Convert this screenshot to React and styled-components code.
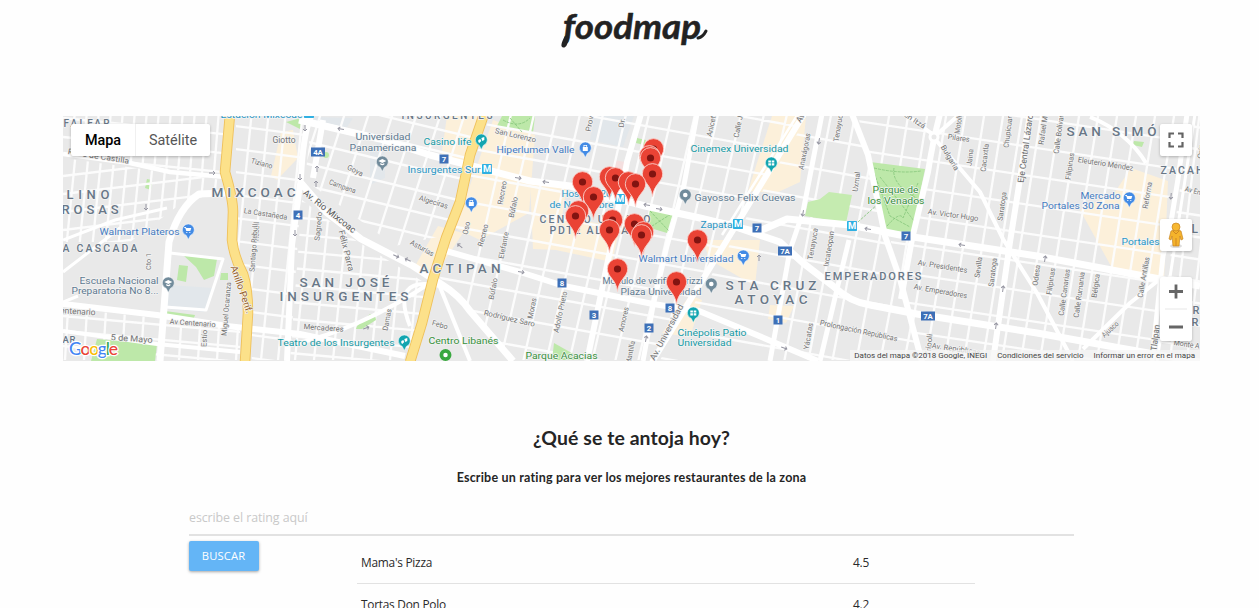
import React from 'react';
import styled, { createGlobalStyle } from 'styled-components';

const GlobalStyle = createGlobalStyle`
  * { box-sizing: border-box; }
  html, body { margin: 0; background: #fefefe; overflow: hidden; }
  body { font-family: "Open Sans", "Noto Sans", sans-serif; color: #2a2a2a; }
`;

const Page = styled.main`
  height: 608px;
  overflow: hidden;
`;

const Header = styled.header`
  height: 116px;
  padding-top: 1px;
  display: flex;
  justify-content: center;
`;

const Logo = styled.svg`
  width: 170px;
  height: 56px;
  margin-left: 7px;
`;

const MapFrame = styled.section`
  position: relative;
  width: 1137px;
  height: 245px;
  margin-left: 63px;
  overflow: hidden;
  font-family: Roboto, "Liberation Sans", sans-serif;
`;

const MapCanvas = styled.svg`
  display: block;
  width: 1137px;
  height: 245px;
`;

const MapTypes = styled.div`
  position: absolute;
  top: 8px;
  left: 8px;
  height: 32px;
  display: flex;
  background: #fff;
  border-radius: 2px;
  box-shadow: 0 1px 3px rgba(0, 0, 0, 0.25);
`;

const MapType = styled.button`
  width: ${(p) => (p.$active ? 64 : 75)}px;
  padding: 0;
  border: 0;
  border-left: ${(p) => (p.$active ? 0 : 1)}px solid #f0f0f0;
  background: none;
  font: ${(p) => (p.$active ? 500 : 400)} 14.4px Roboto, sans-serif;
  color: ${(p) => (p.$active ? '#000' : '#565656')};
`;

const Controls = styled.div`
  position: absolute;
  top: 8px;
  right: 8px;
  width: 32px;
  display: flex;
  flex-direction: column;
`;

const Control = styled.button`
  height: ${(p) => p.$height || 32}px;
  margin: 0 0 ${(p) => p.$gap || 0}px;
  padding: 0;
  border: 0;
  border-radius: 2px;
  background: #fff;
  box-shadow: 0 1px 3px rgba(0, 0, 0, 0.25);
  svg { display: block; }
`;

const Attribution = styled.footer`
  position: absolute;
  right: 0;
  bottom: 0;
  height: 11px;
  padding: 1px 5px 0 4px;
  display: flex;
  gap: 10px;
  background: rgba(245, 245, 245, 0.75);
  font-size: 8px;
  line-height: 10px;
  color: #444;
  white-space: nowrap;
`;

const Intro = styled.section`
  padding-top: 64px;
  padding-left: 4px;
  text-align: center;
  font-family: Lato, sans-serif;
  color: #252525;
`;

const Title = styled.h2`
  margin: 0;
  font-size: 19.4px;
  line-height: 26px;
  font-weight: 700;
  letter-spacing: 0.1px;
`;

const Subtitle = styled.h3`
  margin: 19px 0 0;
  font-size: 12.5px;
  line-height: 16px;
  font-weight: 700;
  letter-spacing: 0.2px;
`;

const Search = styled.form`
  width: 885px;
  margin: 15px 0 0 189px;
`;

const RatingInput = styled.input`
  display: block;
  width: 100%;
  height: 35px;
  padding: 0 0 1px;
  border: 0;
  border-bottom: 2px solid #e2e2e2;
  background: none;
  font: 12.4px "Open Sans", sans-serif;
  letter-spacing: -0.08px;
  &::placeholder { color: #c9c9c9; opacity: 1; }
`;

const Results = styled.div`
  display: flex;
  align-items: flex-start;
  padding-top: 5px;
`;

const SearchButton = styled.button`
  width: 70px;
  height: 30px;
  margin-right: 98px;
  padding: 0 1px 2px 0;
  border: 0;
  border-radius: 2px;
  background: #64b5f6;
  box-shadow: 0 1px 3px rgba(0, 0, 0, 0.35);
  font: 11.2px "Open Sans", sans-serif;
  letter-spacing: 0.15px;
  color: #fff;
`;

const Table = styled.div`
  width: 618px;
`;

const Row = styled.div`
  height: 42.5px;
  padding: 0 4px;
  display: grid;
  grid-template-columns: 492px 1fr;
  align-items: center;
  border-bottom: 1px solid #e2e2e2;
  font-size: 11.9px;
  letter-spacing: -0.26px;
`;

const gridLines = (x0, x1, step, slope) => {
  const lines = [];
  for (let x = x0; x < x1; x += step) lines.push(`M${x} 110l${slope * 260} 260`);
  return lines.join('');
};
const crossLines = (left, right, y0, y1, step, slope) => {
  const lines = [];
  for (let y = y0; y < y1; y += step) lines.push(`M${left} ${y}L${right} ${y + slope * (right - left)}`);
  return lines.join('');
};

const districts = [
  { area: '63,116 226,116 222,176 63,155', d: gridLines(75, 260, 12, -0.08) + crossLines(63, 230, 118, 160, 19, 0.1) },
  { area: '63,158 222,180 220,190 175,208 130,242 63,242', d: gridLines(80, 270, 13, -0.1) + crossLines(63, 230, 176, 250, 18, -0.12) },
  { area: '63,308 240,327 240,360 63,360', d: gridLines(80, 280, 19, -0.06) + crossLines(63, 250, 316, 370, 15, 0.09) },
  { area: '236,116 306,116 290,360 252,360 236,245', d: gridLines(252, 340, 17, -0.1) + crossLines(228, 306, 125, 360, 23, 0.13) },
  { area: '312,116 480,116 447,235 395,246 305,180', d: gridLines(322, 540, 24, -0.32) + crossLines(300, 490, 96, 242, 22, 0.24) },
  { area: '302,200 355,240 430,286 410,360 290,360', d: gridLines(320, 470, 19, -0.1) + crossLines(290, 440, 200, 360, 17, 0.09) },
  { area: '490,116 800,116 652,360 516,360 438,276 450,230', d: gridLines(512, 860, 23, -0.23) + crossLines(440, 800, 62, 360, 27, 0.18) },
  { area: '808,116 855,116 920,360 660,360', d: gridLines(832, 1000, 24, -0.19) + crossLines(650, 930, 108, 360, 31, 0.18) },
  { area: '858,116 1184,116 1148,360 922,360', d: gridLines(890, 1240, 19, -0.16) + crossLines(850, 1200, 62, 360, 29, 0.15) },
  { area: '1190,116 1200,116 1200,360 1156,360', d: gridLines(1200, 1250, 17, -0.12) + crossLines(1150, 1200, 120, 360, 22, 0.15) },
];

const blocks = [
  ['#fcf0da', '281,132 293,130 298,158 277,180 271,176'],
  ['#fcf0da', '447,116 480,116 466,166 441,158'],
  ['#fcf0da', '493,120 535,135 529,213 480,240 455,228'],
  ['#fcf0da', '438,226 463,233 433,278 415,266'],
  ['#fcf0da', '530,180 567,185 557,250 533,249'],
  ['#fcf0da', '558,215 620,228 612,262 556,250'],
  ['#fcf0da', '772,116 806,116 800,182 776,193 748,191'],
  ['#fcf0da', '702,240 760,240 755,286 710,260'],
  ['#fcf0da', '690,295 702,300 690,337 662,333'],
  ['#fcf0da', '770,305 794,306 786,323 768,319'],
  ['#fcf0da', '1131,168 1168,181 1164,280 1112,268 1080,210 1115,192'],
  ['#e2e7eb', '168,285 214,288 204,312 166,309'],
  ['#e2e7eb', '370,149 384,138 385,178 370,185'],
  ['#e2e7eb', '314,117 353,118 343,133 319,128'],
  ['#e2e7eb', '594,116 634,116 623,147 590,140'],
  ['#f4dfdf', '614,160 630,163 625,175 613,173'],
  ['#bde8a9', '183,255 217,259 214,276 204,280 196,267'],
  ['#bde8a9', '179,265 188,266 186,282 177,280'],
  ['#bde8a9', '221,273 228,273 228,280 220,280'],
  ['#bde8a9', '147,179 152,180 151,190 145,188'],
  ['#bde8a9', '165,311 195,315 194,318 164,317'],
  ['#bde8a9', '286,122 301,118 302,130'],
  ['#bde8a9', '502,116 535,116 533,133 497,126'],
  ['#bde8a9', '637,138 646,140 644,145 636,143'],
  ['#bde8a9', '1134,141 1144,142 1142,147 1133,145'],
];

const parks = [
  ['#bde8a9', '870,162 925,169 912,232 887,231'],
  ['#c5ebb0', '808,202 820,199 829,192 852,195 846,223 805,216'],
  ['#bde8a9', '97,339 157,344 155,361 91,361'],
  ['#bde8a9', '650,209 673,213 667,233 647,227'],
  ['#bde8a9', '554,343 584,360 552,360'],
  ['#bde8a9', '357,326 370,314 375,315 376,320 362,329 356,329'],
];

const roads = [
  [4.5, 'M63 154L130 163L170 172L225 177'],
  [7, 'M225 193L199 194Q179 207 169 242L160 361'],
  [6, 'M63 304L157 315L227 326L300 334L405 356'],
  [4, 'M63 331L157 344L240 352'],
  [3, 'M63 240L115 220L167 208M63 272L120 228M78 296L63 302M170 253L223 259L206 310L165 307'],
  [6, 'M311 116Q303 135 301 177L292 245L287 361M323 120L313 178'],
  [7, 'M301 183L326 212L361 239L413 266L441 284Q459 295 470 311L513 361'],
  [7, 'M299 120L380 139L430 155L530 181L570 186L645 206L700 218L757 232L787 219L850 225L900 235L1037 256L1160 279L1200 286'],
  [6, 'M804 114L727 240L652 362'],
  [2.5, 'M798 114L722 235'],
  [6, 'M439 249L520 272L564 286L653 304L699 311L752 333L818 361'],
  [7, 'M733 226L780 242L803 263L833 286Q850 302 870 305L917 314L980 324L1037 333L1120 348L1200 362'],
  [6, 'M852 114L868 155L885 236L900 279L922 362'],
  [6, 'M940 114Q933 140 928 172L912 239L901 299'],
  [6, 'M1030 114L1020 179L1010 242L993 361'],
  [5, 'M1187 114L1178 179L1171 222L1163 256L1152 361'],
  [3, 'M1195 114L1185 180L1168 290L1157 361'],
  [4, 'M935 139L980 192L1003 239L1037 293L1073 361M1160 279L1130 303L1083 349'],
  [4, 'M960 114L935 136L905 114M1090 117Q1127 132 1146 163'],
  [6, 'M641 114L627 162L611 246L587 361'],
  [5, 'M697 114L684 185L667 246L653 306L643 361'],
  [5, 'M822 114L803 212L790 250L770 361'],
  [5, 'M849 240L838 285L820 361'],
  [4, 'M410 326Q390 275 440 286M290 345Q360 330 433 281M440 287L470 361'],
];

const LABEL = '#687787';
const STREET = '#737373';
const POI = '#5d7990';
const SHOP = '#447bc1';
const TEAL = '#159aa5';
const GREEN = '#38913c';
const METRO = '#2996c4';

/* [text, x, y, width, size, color, rotation, weight] */
const labels = [
  ['FALFAR', 63, 127, 46, 10, LABEL, 0, 500],
  ['INSURGENTES', 401, 119, 91, 10, LABEL, 0, 500],
  ['LINO', 66, 199, 43, 13, LABEL, 0, 500],
  ['ROSAS', 61, 214, 57, 13, LABEL, 0, 500],
  ['MIXCOAC', 211, 197, 84, 13.5, LABEL, 0, 500],
  ['A CASCADA', 62, 252, 75, 10.5, LABEL, 0, 500],
  ['AR', 62, 343, 13, 9.5, LABEL, 0, 500],
  ['SAN JOSÉ', 299, 287, 90, 13.5, LABEL, 0, 500],
  ['INSURGENTES', 279, 301, 129, 13.5, LABEL, 0, 500],
  ['ACTIPAN', 419, 273, 81, 13.5, LABEL, 0, 500],
  ['CENTRO URBANO', 539, 223, 111, 10.5, LABEL, 0, 500],
  ['PDTE ALEMÁN', 549, 234, 88, 10.5, LABEL, 0, 500],
  ['STA CRUZ', 725, 290, 91, 13.5, LABEL, 0, 500],
  ['ATOYAC', 734, 304, 73, 13.5, LABEL, 0, 500],
  ['EMPERADORES', 824, 280, 97, 11, LABEL, 0, 500],
  ['SAN SIMÓ', 1066, 136, 90, 13.5, LABEL, 0, 500],
  ['ZACAH', 1160, 174, 43, 10.5, LABEL, 0, 500],
  ['L', 1191, 233, 8, 12, LABEL, 0, 500],
  ['R', 1192, 314, 8, 11, LABEL, 0, 500],
  ['RI', 1191, 326, 14, 11, LABEL, 0, 500],
  ['Universidad', 355, 140, 55, 9.9, POI],
  ['Panamericana', 349, 151, 67, 9.9, POI],
  ['Casino life', 423, 145, 48, 9.9, TEAL],
  ['Insurgentes Sur', 407, 173, 73, 9.9, METRO],
  ['Estación Mixcoac', 220, 118, 82, 9.9, METRO],
  ['Hiperlumen Valle', 496, 153, 78, 9.9, SHOP],
  ['Walmart Plateros', 99, 235, 80, 9.9, SHOP],
  ['Escuela Nacional', 79, 284, 79, 9.9, POI],
  ['Preparatoria No 8...', 71, 294, 87, 9.9, POI],
  ['Teatro de los Insurgentes', 277, 346, 117, 9.9, TEAL],
  ['Centro Libanés', 428, 344, 70, 9.9, GREEN],
  ['Parque Acacias', 525, 359, 72, 9.9, GREEN],
  ['Hospital 20', 561, 197, 50, 9.9, METRO],
  ['de Noviembre', 549, 208, 64, 9.9, METRO],
  ['Cinemex Universidad', 690, 152, 98, 9.9, TEAL],
  ['Gayosso Felix Cuevas', 694, 201, 101, 9.9, POI],
  ['Zapata', 700, 228, 32, 9.9, METRO],
  ['Walmart Universidad', 638, 262, 95, 9.9, SHOP],
  ['Módulo de verificentrizzi', 602, 284, 100, 9.9, POI],
  ['Plaza Universidad', 620, 295, 81, 9.9, POI],
  ['Cinépolis Patio', 677, 336, 69, 9.9, TEAL],
  ['Universidad', 677, 346, 54, 9.9, TEAL],
  ['Parque de', 872, 193, 46, 9.9, GREEN],
  ['los Venados', 867, 204, 57, 9.9, GREEN],
  ['Mercado', 1080, 199, 40, 9.9, SHOP],
  ['Portales 30 Zona', 1041, 209, 78, 9.9, SHOP],
  ['Portales', 1121, 245, 38, 9.9, METRO],
  ['Rosa de Castilla', 67, 154, 62, 8, STREET, 9],
  ['Giotto', 272, 143, 23, 8.5, STREET],
  ['Tiziano', 250, 163, 22, 7.5, STREET, 15],
  ['La Castañeda', 243, 213, 44, 7.5, STREET, 9],
  ['Rebull', 258, 241, 19, 7.5, STREET, -88],
  ['Santiago Rebull', 254, 272, 48, 7.5, STREET, -86],
  ['Cto 1', 150, 270, 17, 7.5, STREET, -90],
  ['Centenario', 54, 313, 41, 8.5, STREET, 3],
  ['Av Centenario', 169, 324, 46, 7.5, STREET, 4],
  ['5 de Mayo', 110, 340, 42, 8.5, STREET, 4],
  ['Miguel Ocaranza', 226, 336, 54, 7.5, STREET, -85],
  ['Estío', 206, 347, 17, 7.5, STREET, -88],
  ['Anillo Perif.', 230, 267, 50, 9.7, '#975d23', 71],
  ['Goya', 346, 169, 17, 7.5, STREET, 26],
  ['Campana', 328, 184, 28, 7.5, STREET, 20],
  ['Algeciras', 418, 200, 30, 7.5, STREET, 17],
  ['Av. Río Mixcoac', 302, 194, 64, 9, '#555', 38],
  ['Félix Parra', 338, 231, 42, 8.5, STREET, 76],
  ['Sagredo', 319, 241, 29, 7.5, STREET, -85],
  ['Asturias', 409, 244, 26, 7.5, STREET, 29],
  ['San Lorenzo', 494, 133, 42, 7.5, STREET, 13],
  ['Recreo', 502, 205, 24, 7.5, STREET, -80],
  ['Búfalo', 513, 218, 21, 7.5, STREET, -78],
  ['Oso', 467, 235, 13, 7.5, STREET, -78],
  ['Recreo', 482, 247, 23, 7.5, STREET, -75],
  ['Elefante', 503, 259, 27, 7.5, STREET, -79],
  ['Búfalo', 493, 300, 22, 7.5, STREET, -79],
  ['Rodríguez Saro', 483, 315, 52, 7.5, STREET, 13],
  ['Mercaderes', 303, 329, 40, 7.5, STREET, 4],
  ['Damas', 387, 331, 22, 7.5, STREET, -79],
  ['Febo', 431, 325, 16, 7.5, STREET, 16],
  ['Provi', 590, 132, 18, 7.5, STREET, -79],
  ['Dr. R', 623, 128, 17, 7.5, STREET, -80],
  ['Moras', 532, 319, 21, 7.5, STREET, -79],
  ['Adolfo Prieto', 558, 333, 42, 7.5, STREET, -78],
  ['Amores', 623, 332, 25, 7.5, STREET, -78],
  ['Mantilla', 630, 365, 24, 7.5, STREET, -79],
  ['Av. Universidad', 654, 361, 62, 8.5, STREET, -62],
  ['Anicet', 711, 137, 21, 7.5, STREET, -78],
  ['Calle J.', 738, 138, 24, 7.5, STREET, -79],
  ['Av. Universidad', 800, 123, 53, 8.5, STREET, -58],
  ['Anaxágoras', 803, 170, 37, 7.5, STREET, -79],
  ['Tenayuc', 838, 142, 27, 7.5, STREET, -81],
  ['Uxmal', 857, 192, 20, 7.5, STREET, -82],
  ['Tenayuca', 812, 260, 32, 7.5, STREET, -80],
  ['Ixcateopan', 828, 267, 36, 7.5, STREET, -81],
  ['Prolongación Repúblicas', 819, 325, 79, 7.8, STREET, 12],
  ['Yácatas', 808, 350, 27, 7.5, STREET, -80],
  ['Chichén Itzá', 886, 105, 44, 7.5, STREET, 33],
  ['Pilares', 947, 139, 22, 7.5, STREET, 8],
  ['Bulgaria', 940, 147, 28, 7.5, STREET, 59],
  ['Jaina', 971, 166, 17, 7.5, STREET, -83],
  ['Motoli', 959, 134, 18, 7.5, STREET, -81],
  ['Av. Víctor Hugo', 927, 214, 51, 7.7, STREET, 8],
  ['Av. Presidentes', 917, 265, 50, 7.7, STREET, 9],
  ['Av. Emperadores', 913, 289, 54, 7.7, STREET, 10],
  ['Trípoli', 930, 356, 22, 7.5, STREET, -85],
  ['Av. Repúblicas', 931, 348, 49, 7.5, STREET, 8],
  ['Sevilla', 979, 278, 21, 7.5, STREET, -82],
  ['Saratoga', 993, 287, 29, 7.5, STREET, -83],
  ['Saratoga', 1002, 221, 29, 7.5, STREET, -82],
  ['Cacaxtla', 985, 172, 28, 7.5, STREET, -83],
  ['Chupícuar', 1008, 148, 32, 7.5, STREET, -83],
  ['Eje Central Lázaro', 1023, 183, 69, 8.7, '#666', -82],
  ['Rafael M', 1043, 145, 29, 7.5, STREET, -82],
  ['Calle Bolívar', 1058, 154, 39, 7.5, STREET, -82],
  ['Filipinas', 1070, 180, 27, 7.5, STREET, -82],
  ['Eleuterio Méndez', 1077, 162, 56, 7.7, STREET, 9],
  ['Reforma', 1147, 209, 27, 7.5, STREET, -80],
  ['Odesa', 1037, 286, 21, 7.5, STREET, -82],
  ['Filipinas', 1051, 295, 27, 7.5, STREET, -82],
  ['Calle Canarias', 1063, 316, 47, 7.5, STREET, -82],
  ['Calle Rumania', 1078, 318, 46, 7.5, STREET, -82],
  ['Bélgica', 1096, 298, 24, 7.5, STREET, -82],
  ['Calle Antillas', 1142, 298, 41, 7.5, STREET, -80],
  ['Ajusco', 1104, 338, 20, 7.5, STREET, -43],
  ['Tlalpan', 1156, 351, 26, 8.5, '#666', -83],
  ['Av En', 1184, 191, 16, 7.5, STREET, 15],
  ['Monte A', 1173, 345, 26, 7.5, STREET, 8],
  ['Orin', 1202, 159, 15, 7.5, STREET, -83],
];

const shields = [
  [318, 152, '4A'], [444, 159, '7'], [298, 215, '4'], [562, 283, '8'], [594, 315, '3'],
  [670, 308, '8'], [649, 328, '2'], [757, 228, '7'], [785, 251, '7A'], [778, 320, '1'],
  [906, 236, '7'], [928, 316, '7A'],
];
const metros = [[487, 169], [620, 199], [738, 224], [852, 226], [309, 113]];
const pois = [
  [382, 162, '#718b9b', 'cap'], [168, 283, '#718b9b', 'cap'], [685, 195, '#718b9b', 'dot'],
  [711, 284, '#718b9b', 'dot'], [481, 140, '#12a5b0', 'mask'], [404, 341, '#12a5b0', 'mask'],
  [471, 203, '#438be5', 'bag'], [585, 148, '#438be5', 'bag'], [188, 230, '#438be5', 'cart'],
  [743, 256, '#438be5', 'cart'], [1129, 198, '#438be5', 'cart'], [771, 163, '#12a5b0', 'film'],
  [693, 313, '#12a5b0', 'film'],
];
const glyphs = {
  cap: 'M-4 -1L0 -3L4 -1L0 1ZM-2 1L0 2L2 1V2.5Q0 4 -2 2.5Z',
  dot: 'M-2.3 0A2.3 2.3 0 1 0 2.3 0A2.3 2.3 0 1 0 -2.3 0',
  mask: 'M-3 0L-1 -1L0 1L-2 3L-3 2ZM0 -2L3 -3V0L1 1Z',
  bag: 'M-2.5 -1H2.5V3H-2.5ZM-1.8 -1V-3H1.8V-1H1V-2.2H-1V-1Z',
  cart: 'M-4 -3H-2.5L-2 -2H3L2 1H-2L-3 -2H-4ZM-2 2H-1V3H-2ZM1 2H2V3H1Z',
  film: 'M-3 -2.5H-.4V-.4H-3ZM.4 -2.5H3V-.4H.4ZM-3 .3H-.4V2.5H-3ZM.4 .3H3V2.5H.4Z',
};
const markers = [
  [653, 149], [649, 156], [650, 158], [652, 174], [609, 177], [615, 178], [582, 182], [628, 182],
  [635, 184], [593, 197], [578, 211], [575, 216], [612, 220], [634, 224], [609, 230], [643, 232],
  [641, 235], [697, 240], [617, 269], [676, 282],
];
const arrows = [
  [212, 173, 0], [146, 207, 90], [341, 129, 190], [305, 128, 90], [317, 169, -90], [316, 184, -90],
  [300, 177, 90], [295, 233, 90], [396, 256, 25], [408, 260, 205], [518, 178, 8], [546, 182, 188],
  [647, 205, 190], [659, 209, 10], [460, 246, 220], [521, 272, 10], [646, 339, -80], [759, 258, -90],
  [819, 141, 100], [803, 213, 100], [868, 229, 190], [784, 348, 20], [962, 245, 190],
  [1003, 289, -82], [996, 326, -82], [1171, 196, 95], [1045, 259, -80], [366, 328, -20],
];

function MapLabel({ item }) {
  const [text, x, y, width, size, color, rotation = 0, weight = 400] = item;
  return (
    <text
      transform={`translate(${x + 0.5} ${y}) rotate(${rotation})`}
      textLength={width}
      lengthAdjust={weight === 500 ? 'spacing' : 'spacingAndGlyphs'}
      fontSize={size}
      fontWeight={weight}
      fill={color}
      stroke="#f4f4f4"
      strokeWidth="1.5"
      strokeLinejoin="round"
      paintOrder="stroke"
    >
      {text}
    </text>
  );
}

function CityMap() {
  return (
    <MapCanvas viewBox="63 116 1137 245">
      <rect x="63" y="116" width="1137" height="245" fill="#e9e9e9" />
      {blocks.map(([fill, points]) => <polygon key={points} points={points} fill={fill} />)}
      {districts.map(({ area, d }, i) => (
        <g key={area}>
          <clipPath id={`district-${i}`}><polygon points={area} /></clipPath>
          <path d={d} clipPath={`url(#district-${i})`} stroke="#fcfcfc" strokeWidth="2.3" fill="none" />
        </g>
      ))}
      {parks.map(([fill, points]) => <polygon key={points} points={points} fill={fill} />)}
      <path d="M874 168Q899 174 921 171M880 177Q899 201 914 221M887 226Q900 211 903 218L918 183M873 170L890 216L910 227M894 168Q891 185 920 200M650 211L669 231M671 214L649 228M858 222L879 203M503 120Q519 129 530 118M510 118L522 132" stroke="#84c57a" strokeWidth="0.8" fill="none" strokeDasharray="3 1" />
      <g fill="none" stroke="#fff" strokeLinejoin="round">
        {roads.map(([width, d]) => <path key={d} d={d} strokeWidth={width} />)}
      </g>
      <circle cx="934" cy="137" r="4" fill="#e9e9e9" stroke="#fff" strokeWidth="3" />
      <circle cx="326" cy="155" r="3" fill="#bde8a9" />
      <g fill="none" strokeLinejoin="round">
        {['M230 114L225 172Q233 199 233 212L232 240Q234 257 243 274Q248 289 248 313L245 362', 'M484 114L470 155L460 202L446 238L433 279L422 323L410 362'].map((d) => (
          <g key={d}>
            <path d={d} stroke="#efc15b" strokeWidth="10.5" />
            <path d={d} stroke="#fce18a" strokeWidth="8.7" />
          </g>
        ))}
      </g>
      <g fill="none" stroke="#9696a2" strokeWidth="1">
        {arrows.map(([x, y, r], i) => <path key={i} transform={`translate(${x} ${y}) rotate(${r})`} d="M-3 0H3M1 -2L3 0L1 2" />)}
      </g>
      {labels.map((item, i) => <MapLabel key={i} item={item} />)}
      {shields.map(([x, y, name]) => (
        <g key={`${x}-${y}`}>
          <rect x={x - (name.length > 1 ? 7 : 4.5)} y={y - 4.5} width={name.length > 1 ? 14 : 9} height="9" fill="#3e70b7" />
          <text x={x} y={y + 2.8} fontSize="7.8" fontWeight="700" textAnchor="middle" fill="#fff">{name}</text>
        </g>
      ))}
      {metros.map(([x, y]) => (
        <g key={x}>
          <rect x={x - 5} y={y - 5} width="10" height="10" rx="0.7" fill="#30b0e2" />
          <text x={x} y={y + 3.4} fontSize="9.4" fontWeight="700" textAnchor="middle" fill="#fff">M</text>
        </g>
      ))}
      {pois.map(([x, y, fill, glyph]) => (
        <g key={`${x}-${y}`} transform={`translate(${x + 0.3} ${y})`}>
          <path d="M0 9.5L-2 5.5Q-6 3.5 -6 0A6 6 0 0 1 6 0Q6 3.5 2 5.5Z" fill={fill} stroke="#fff" strokeWidth="0.5" />
          <path d={glyphs[glyph]} fill="#fff" />
        </g>
      ))}
      <circle cx="445.5" cy="355" r="4.1" fill="#fff" stroke="#39a83f" strokeWidth="3.7" />
      {markers.map(([x, y], i) => (
        <g key={i} transform={`translate(${x + 0.5} ${y})`}>
          <path d="M0 22.5C-1.5 10 -10.2 8 -10.2 -0.2A10.2 10.2 0 0 1 10.2 -0.2C10.2 8 1.5 10 0 22.5Z" fill="#ea4335" stroke="#fbd1cc" strokeWidth="0.9" />
          <circle r="3.6" fill="#811411" />
        </g>
      ))}
      <text x="69" y="355" fontSize="17.5" fontFamily="Lato, sans-serif" fontWeight="500" textLength="49" stroke="#fff" strokeWidth="2.5" paintOrder="stroke">
        <tspan fill="#4285f4">G</tspan><tspan fill="#ea4335">o</tspan><tspan fill="#fbbc05">o</tspan><tspan fill="#4285f4">g</tspan><tspan fill="#34a853">l</tspan><tspan fill="#ea4335">e</tspan>
      </text>
    </MapCanvas>
  );
}

const restaurants = [["Mama's Pizza", '4.5'], ['Tortas Don Polo', '4.2']];

export default function App() {
  return (
    <Page>
      <GlobalStyle />
      <Header>
        <Logo viewBox="0 0 170 56" role="img" aria-label="foodmap">
          <text x="15" y="38" fontFamily="Lato, sans-serif" fontStyle="italic" fontWeight="700" fontSize="34.5" fill="#222" stroke="#222" strokeWidth="0.5" strokeLinejoin="round" textLength="138" lengthAdjust="spacingAndGlyphs">foodmap</text>
          <path d="M18 36Q13 46 16 45Q19 43 19 36M150 37Q155 36 158 30" fill="none" stroke="#222" strokeWidth="3" strokeLinecap="round" />
        </Logo>
      </Header>
      <MapFrame>
        <CityMap />
        <MapTypes>
          <MapType $active>Mapa</MapType>
          <MapType>Satélite</MapType>
        </MapTypes>
        <Controls>
          <Control $gap={63} aria-label="Pantalla completa">
            <svg width="32" height="32" fill="none" stroke="#646464" strokeWidth="2.2"><path d="M9.5 14V9.5H14M18 9.5H22.5V14M22.5 18V22.5H18M14 22.5H9.5V18" /></svg>
          </Control>
          <Control $gap={26} aria-label="Street View">
            <svg width="32" height="32"><ellipse cx="16" cy="27" rx="6" ry="2" fill="#ddd" /><path d="M11 12Q16 9 21 12L23 20L21 21L20 17L19 27H13L12 17L11 21L9 20Z" fill="#f5b32b" stroke="#c98522" strokeWidth="0.7" /><path d="M13 12L16 15L19 12M16 19V27" fill="none" stroke="#cf8722" /><circle cx="16" cy="8" r="4" fill="#f7b832" stroke="#c98522" strokeWidth="0.7" /></svg>
          </Control>
          <Control $height={64} aria-label="Zoom">
            <svg width="32" height="64"><path d="M9 14.5H23M16 7.5V21.5M9 50H23" stroke="#666" strokeWidth="2.8" /><path d="M5 32H27" stroke="#e7e7e7" /></svg>
          </Control>
        </Controls>
        <Attribution>
          <span>Datos del mapa ©2018 Google, INEGI</span>
          <span>Condiciones del servicio</span>
          <span>Informar un error en el mapa</span>
        </Attribution>
      </MapFrame>
      <Intro>
        <Title>¿Qué se te antoja hoy?</Title>
        <Subtitle>Escribe un rating para ver los mejores restaurantes de la zona</Subtitle>
      </Intro>
      <Search onSubmit={(e) => e.preventDefault()}>
        <RatingInput placeholder="escribe el rating aquí" />
        <Results>
          <SearchButton>BUSCAR</SearchButton>
          <Table>
            {restaurants.map(([name, rating]) => (
              <Row key={name}><span>{name}</span><span>{rating}</span></Row>
            ))}
          </Table>
        </Results>
      </Search>
    </Page>
  );
}
